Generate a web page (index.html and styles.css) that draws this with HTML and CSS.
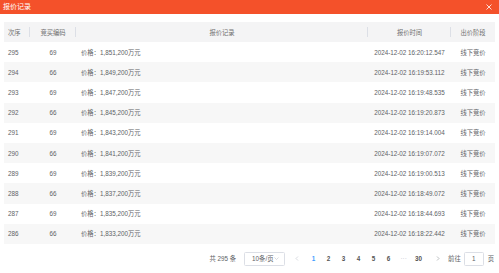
FILE: index.html
```html
<!DOCTYPE html>
<html lang="zh">
<head>
<meta charset="utf-8">
<title>报价记录</title>
<link rel="stylesheet" href="styles.css">
</head>
<body>
<div class="dialog">
  <div class="title-bar">
    <span class="title">报价记录</span>
    <svg class="close" width="6" height="6" viewBox="0 0 6 6"><path d="M0.5 0.5L5.5 5.5M5.5 0.5L0.5 5.5" stroke="#fff" stroke-width="0.8" fill="none"/></svg>
  </div>
  <div class="content">
    <table class="records">
      <colgroup>
        <col class="c-seq"><col class="c-code"><col class="c-rec"><col class="c-time"><col class="c-stage">
      </colgroup>
      <thead>
        <tr>
          <th class="left sep">次序</th>
          <th class="sep">竞买编码</th>
          <th class="sep">报价记录</th>
          <th class="sep">报价时间</th>
          <th>出价阶段</th>
        </tr>
      </thead>
      <tbody>
        <tr><td class="left">295</td><td>69</td><td class="left rec">价格：1,851,200万元</td><td>2024-12-02 16:20:12.547</td><td>线下竞价</td></tr>
        <tr><td class="left">294</td><td>66</td><td class="left rec">价格：1,849,200万元</td><td>2024-12-02 16:19:53.112</td><td>线下竞价</td></tr>
        <tr><td class="left">293</td><td>69</td><td class="left rec">价格：1,847,200万元</td><td>2024-12-02 16:19:48.535</td><td>线下竞价</td></tr>
        <tr><td class="left">292</td><td>66</td><td class="left rec">价格：1,845,200万元</td><td>2024-12-02 16:19:20.873</td><td>线下竞价</td></tr>
        <tr><td class="left">291</td><td>69</td><td class="left rec">价格：1,843,200万元</td><td>2024-12-02 16:19:14.004</td><td>线下竞价</td></tr>
        <tr><td class="left">290</td><td>66</td><td class="left rec">价格：1,841,200万元</td><td>2024-12-02 16:19:07.072</td><td>线下竞价</td></tr>
        <tr><td class="left">289</td><td>69</td><td class="left rec">价格：1,839,200万元</td><td>2024-12-02 16:19:00.513</td><td>线下竞价</td></tr>
        <tr><td class="left">288</td><td>66</td><td class="left rec">价格：1,837,200万元</td><td>2024-12-02 16:18:49.072</td><td>线下竞价</td></tr>
        <tr><td class="left">287</td><td>69</td><td class="left rec">价格：1,835,200万元</td><td>2024-12-02 16:18:44.693</td><td>线下竞价</td></tr>
        <tr><td class="left">286</td><td>66</td><td class="left rec">价格：1,833,200万元</td><td>2024-12-02 16:18:22.442</td><td>线下竞价</td></tr>
      </tbody>
    </table>
    <div class="pager">
      <span class="total">共 295 条</span>
      <span class="sizes">10条/页<svg class="caret" width="5" height="3" viewBox="0 0 5 3"><path d="M0.5 0.5L2.5 2.5L4.5 0.5" stroke="#c0c4cc" stroke-width="0.6" fill="none"/></svg></span>
      <span class="btn prev"><svg width="4" height="5" viewBox="0 0 4 5"><path d="M3 0.5L1 2.5L3 4.5" stroke="#c0c4cc" stroke-width="0.6" fill="none"/></svg></span>
      <span class="num active">1</span>
      <span class="num">2</span>
      <span class="num">3</span>
      <span class="num">4</span>
      <span class="num">5</span>
      <span class="num">6</span>
      <span class="num more">···</span>
      <span class="num">30</span>
      <span class="btn next"><svg width="4" height="5" viewBox="0 0 4 5"><path d="M1 0.5L3 2.5L1 4.5" stroke="#909399" stroke-width="0.6" fill="none"/></svg></span>
      <span class="jump">前往<span class="jump-input">1</span>页</span>
    </div>
  </div>
</div>
</body>
</html>
```

FILE: styles.css
```css
* { box-sizing: border-box; }
html, body { margin: 0; padding: 0; background: #fff; }
body {
  font-family: "Liberation Sans", "Noto Sans CJK SC", sans-serif;
  color: #606266;
  width: 499px;
  height: 273px;
  overflow: hidden;
}
.dialog { width: 499px; height: 273px; display: flex; flex-direction: column; }
.title-bar {
  height: 14px;
  background: #f4512a;
  display: flex;
  align-items: center;
  justify-content: space-between;
  padding: 0 7px 0 3px;
}
.title { color: #fff; font-size: 7px; line-height: 14px; }
.close { display: block; }
.content { padding: 8px 4px 0 4px; }
.records {
  width: 491px;
  table-layout: fixed;
  border-collapse: collapse;
  font-size: 6.3px;
}
.c-seq { width: 26px; }
.c-code { width: 46px; }
.c-rec { width: 292px; }
.c-time { width: 83px; }
.c-stage { width: 44px; }
.records th {
  height: 20px;
  background-color: #f4f4f5;
  font-weight: normal;
  color: #707070;
  text-align: center;
  padding: 0;
}
.records th.sep {
  background-image: linear-gradient(#dcdfe6, #dcdfe6);
  background-size: 1px 10px;
  background-position: right center;
  background-repeat: no-repeat;
}
.records td {
  height: 20.2px;
  text-align: center;
  padding: 0;
  white-space: nowrap;
}
.records .left { text-align: left; padding-left: 4px; }
.records td.rec { padding-left: 5px; }
.records tbody tr:nth-child(even) td { background: #f7f7f7; }
.pager {
  display: flex;
  align-items: center;
  justify-content: flex-end;
  height: 14px;
  margin-top: 8px;
  padding-right: 1px;
  font-size: 6.3px;
  color: #606266;
}
.total { margin-right: 8px; }
.sizes {
  width: 41px;
  height: 14px;
  border: 1px solid #dcdfe6;
  border-radius: 1.5px;
  display: flex;
  align-items: center;
  justify-content: space-between;
  padding: 0 5px 0 7px;
  margin-right: 4px;
}
.caret { display: block; }
.btn, .num {
  width: 15px;
  height: 14px;
  display: flex;
  align-items: center;
  justify-content: center;
}
.btn svg { display: block; }
.prev { margin-right: 2px; }
.next { margin-left: 4px; }
.num { font-weight: bold; color: #555; }
.num.active { color: #409eff; }
.num.more { color: #c0c4cc; font-weight: normal; }
.jump { display: flex; align-items: center; margin-left: 3px; }
.jump-input {
  width: 20px;
  height: 14px;
  border: 1px solid #dcdfe6;
  border-radius: 1.5px;
  display: flex;
  align-items: center;
  justify-content: center;
  margin: 0 4px 0 3px;
  color: #606266;
}
```
